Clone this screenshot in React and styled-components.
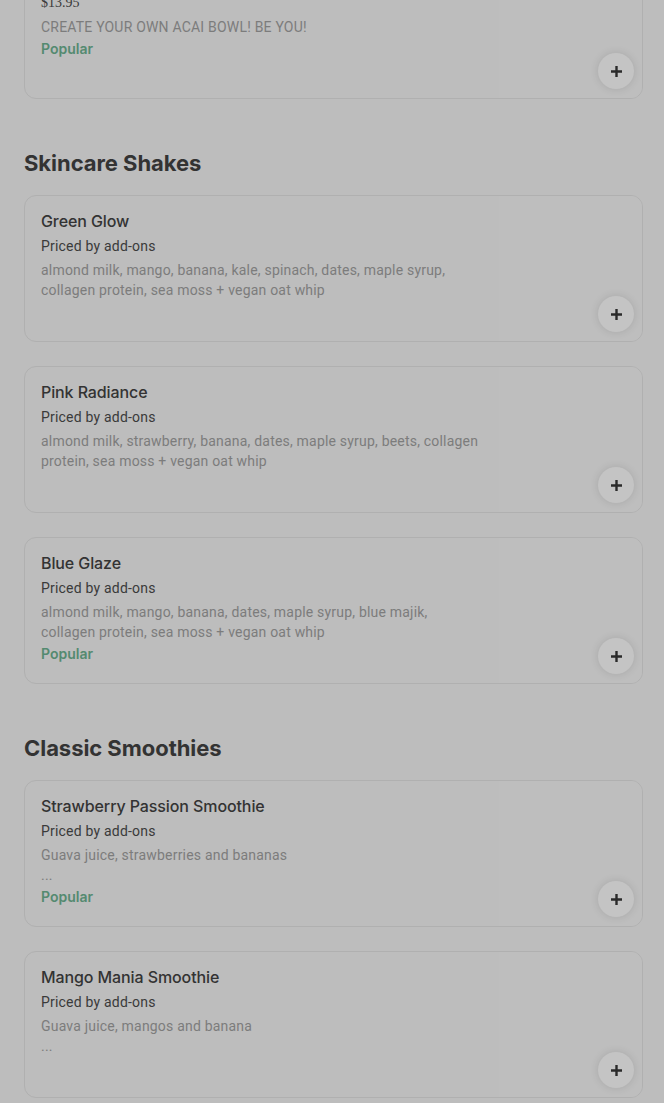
import React from "react";
import styled, { createGlobalStyle } from "styled-components";

const Global = createGlobalStyle`
  html, body { margin: 0; padding: 0; background: #bdbdbd; }
  body { font-family: Roboto, "Noto Sans", sans-serif; -webkit-font-smoothing: antialiased; }
`;

const Page = styled.main`
  padding: 0 21px 0 24px;
  margin-top: -48px;
  display: flex;
  flex-direction: column;
`;

const Section = styled.section`
  display: flex;
  flex-direction: column;
`;

const Heading = styled.h2`
  margin: 50px 0 18px;
  font-family: Inter, "Noto Sans", sans-serif;
  font-size: 22px;
  line-height: 28px;
  font-weight: 700;
  letter-spacing: -0.05px;
  color: #333;
`;

const List = styled.div`
  display: flex;
  flex-direction: column;
  gap: 24px;
`;

const Card = styled.article`
  box-sizing: border-box;
  height: 147px;
  border: 1px solid #b0b0b0;
  border-radius: 12px;
  display: flex;
  overflow: hidden;
`;

const Info = styled.div`
  flex: 1;
  padding: 15px 16px;
  display: flex;
  flex-direction: column;
  min-width: 0;
`;

const Title = styled.div`
  font-family: Inter, "Noto Sans", sans-serif;
  font-size: 16px;
  line-height: 20px;
  font-weight: 500;
  color: #333;
  letter-spacing: -0.1px;
`;

const Price = styled.div`
  margin-top: 5px;
  font-size: 14px;
  line-height: 20px;
  color: #3a3a3a;
  letter-spacing: ${(p) => (p.$serif ? "0" : "0.2px")};
  font-family: ${(p) => (p.$serif ? '"Liberation Serif", serif' : "inherit")};
`;

const Desc = styled.div`
  margin-top: 4px;
  font-size: 14px;
  line-height: 20px;
  letter-spacing: 0.2px;
  color: #7c7c7c;
  white-space: pre-line;
`;

const Badge = styled.div`
  margin-top: 2px;
  font-family: Inter, "Noto Sans", sans-serif;
  font-size: 14px;
  line-height: 20px;
  font-weight: 600;
  color: #548a70;
`;

const Media = styled.div`
  width: 143px;
  flex-shrink: 0;
  background: #bebebe;
  display: flex;
  align-items: flex-end;
  justify-content: flex-end;
  padding: 0 8px 9px 0;
  box-sizing: border-box;
`;

const AddButton = styled.button`
  width: 36px;
  height: 36px;
  border-radius: 50%;
  border: none;
  background: #c4c4c4;
  box-shadow: 0 0 8px rgba(0, 0, 0, 0.12);
  display: flex;
  align-items: center;
  justify-content: center;
  padding: 0;
  color: #2a2a2a;
`;

const Plus = () => (
  <svg width="13" height="13" viewBox="0 0 13 13">
    <path d="M6.5 1v11M1 6.5h11" stroke="currentColor" strokeWidth="2.4" />
  </svg>
);

function Item({ title, price, serif, desc, popular }) {
  return (
    <Card>
      <Info>
        <Title>{title}</Title>
        <Price $serif={serif}>{price}</Price>
        <Desc>{desc}</Desc>
        {popular && <Badge>Popular</Badge>}
      </Info>
      <Media>
        <AddButton aria-label="Add">
          <Plus />
        </AddButton>
      </Media>
    </Card>
  );
}

const sections = [
  {
    heading: null,
    items: [
      {
        title: "Build Your Own Acai Bowl",
        price: "$13.95",
        serif: true,
        desc: "CREATE YOUR OWN ACAI BOWL! BE YOU!",
        popular: true,
      },
    ],
  },
  {
    heading: "Skincare Shakes",
    items: [
      {
        title: "Green Glow",
        price: "Priced by add-ons",
        desc: "almond milk, mango, banana, kale, spinach, dates, maple syrup, collagen protein, sea moss + vegan oat whip",
      },
      {
        title: "Pink Radiance",
        price: "Priced by add-ons",
        desc: "almond milk, strawberry, banana, dates, maple syrup, beets, collagen protein, sea moss + vegan oat whip",
      },
      {
        title: "Blue Glaze",
        price: "Priced by add-ons",
        desc: "almond milk, mango, banana, dates, maple syrup, blue majik, collagen protein, sea moss + vegan oat whip",
        popular: true,
      },
    ],
  },
  {
    heading: "Classic Smoothies",
    items: [
      {
        title: "Strawberry Passion Smoothie",
        price: "Priced by add-ons",
        desc: "Guava juice, strawberries and bananas\n...",
        popular: true,
      },
      {
        title: "Mango Mania Smoothie",
        price: "Priced by add-ons",
        desc: "Guava juice, mangos and banana\n...",
      },
    ],
  },
];

export default function App() {
  return (
    <>
      <Global />
      <Page>
        {sections.map((s, i) => (
          <Section key={i}>
            {s.heading && <Heading>{s.heading}</Heading>}
            <List>
              {s.items.map((it) => (
                <Item key={it.title} {...it} />
              ))}
            </List>
          </Section>
        ))}
      </Page>
    </>
  );
}
